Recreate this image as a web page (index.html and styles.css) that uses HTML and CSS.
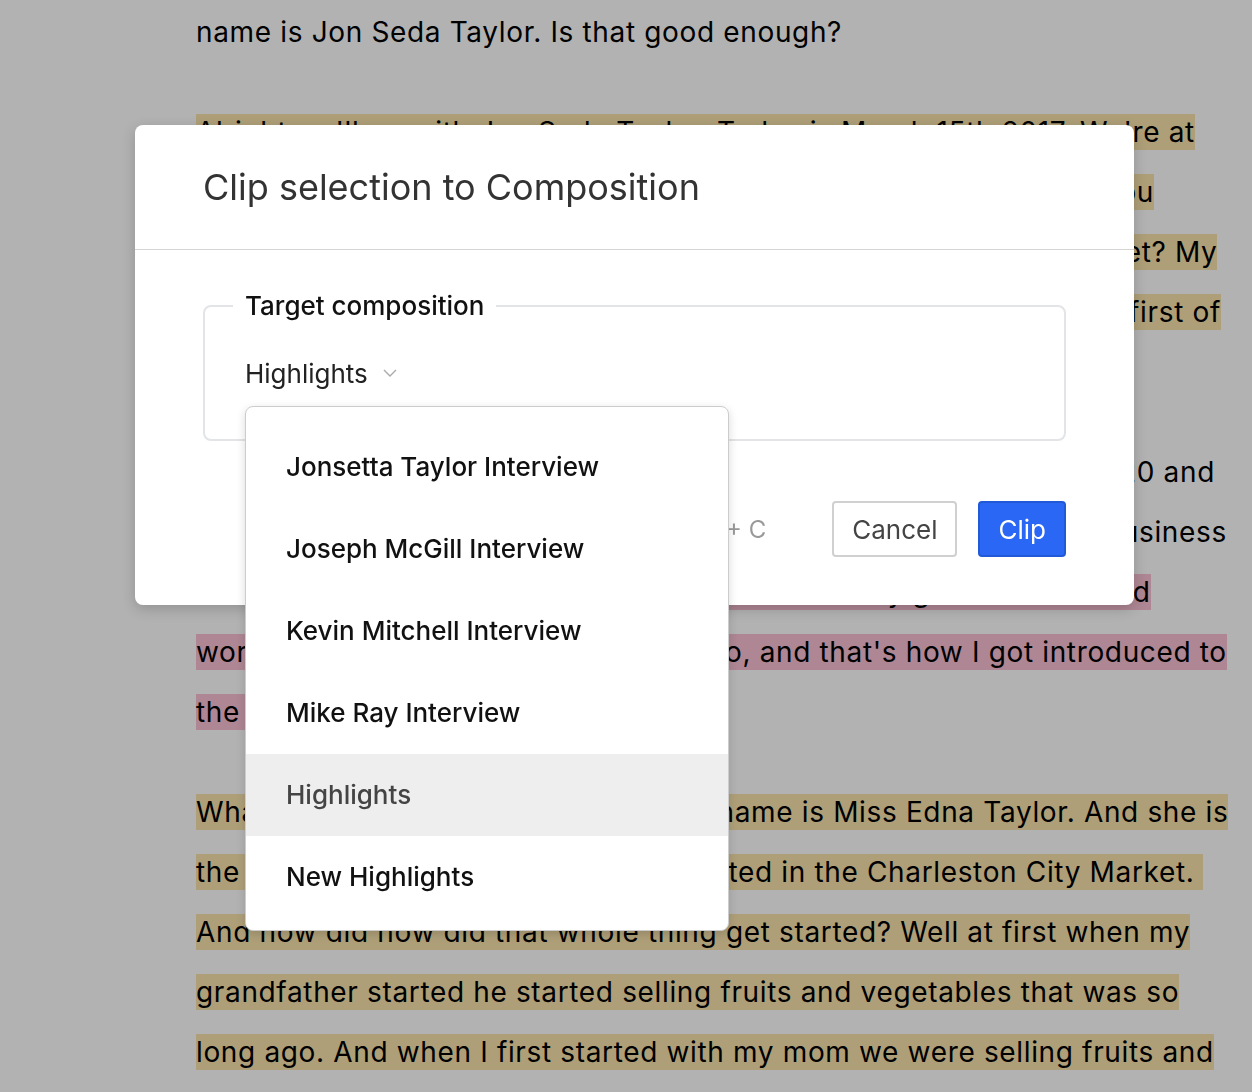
FILE: index.html
```html
<!DOCTYPE html>
<html lang="en">
<head>
    <meta charset="UTF-8">
    <meta name="viewport" content="width=device-width, initial-scale=1.0">
    <title>Clip selection to Composition</title>
    <link rel="stylesheet" href="styles.css">
</head>
<body>
    <main class="transcript">
        <p>name is Jon Seda Taylor. Is that good enough?</p>

        <p><mark class="hl-tan">Alright we'll go with Jon Seda Taylor. Today is March 15th 2017. We're at<br>in Charleston, South Carolina. So do tell me a little bit about what you<br>do here, and how long you've been working in the Charleston Market? My<br>name is Jonsetta Taylor and I am a sweetgrass basket weaver. The first of<br>my family to sew baskets was my great grandmother.</mark></p>

        <p>She started sewing baskets and selling them back in the year of 1920 and<br>then my grandmother and my mother carried on with the family's business<br>after that. When I was little, <mark class="hl-pink">I used to go sit with my grandmother and<br>work on all her baskets after school too, and that's how I got introduced to<br>the craft.</mark></p>

        <p><mark class="hl-tan">What is your mother's full name? Her name is Miss Edna Taylor. And she is<br>the lady who has the stand that is located in the Charleston City Market.&nbsp;<br>And how did how did that whole thing get started? Well at first when my<br>grandfather started he started selling fruits and vegetables that was so<br>long ago. And when I first started with my mom we were selling fruits and</mark></p>
    </main>

    <div class="backdrop"></div>

    <div class="modal">
        <header class="modal-header">
            <h2>Clip selection to Composition</h2>
        </header>

        <div class="modal-body">
            <fieldset class="field">
                <legend>Target composition</legend>
                <div class="select">
                    <button class="select-value">
                        Highlights
                        <svg class="chevron" viewBox="0 0 14 8" width="14" height="8">
                            <path d="M1 1l6 6 6-6" fill="none" stroke="currentColor" stroke-width="1.4"/>
                        </svg>
                    </button>
                    <ul class="select-menu">
                        <li>Jonsetta Taylor Interview</li>
                        <li>Joseph McGill Interview</li>
                        <li>Kevin Mitchell Interview</li>
                        <li>Mike Ray Interview</li>
                        <li class="active">Highlights</li>
                        <li>New Highlights</li>
                    </ul>
                </div>
            </fieldset>
        </div>

        <footer class="modal-footer">
            <span class="shortcut">Ctrl + C</span>
            <button class="btn">Cancel</button>
            <button class="btn btn-primary">Clip</button>
        </footer>
    </div>
</body>
</html>
```

FILE: styles.css
```css
body {
    margin: 0;
    background: #fff;
    color: #000;
    font-family: Inter, 'Noto Sans', sans-serif;
    overflow: hidden;
}

/* transcript behind the dialog */
.transcript {
    padding: 2px 0 0 196px;
    font-size: 28px;
    letter-spacing: 0.65px;
    line-height: 60px;
}

.transcript p {
    margin: 0 0 40px 0;
    white-space: nowrap;
}

.transcript mark {
    color: inherit;
    padding: 1px 0;
}

.hl-tan {
    background: #f9e4ac;
}

.hl-pink {
    background: #f9c0d4;
}

.backdrop {
    position: fixed;
    top: 0;
    left: 0;
    right: 0;
    bottom: 0;
    background: rgba(0,0,0,0.3);
}

/* dialog */
.modal {
    position: fixed;
    top: 125px;
    left: 135px;
    width: 999px;
    background: #fff;
    border-radius: 8px;
    box-shadow: 0 4px 14px rgba(0,0,0,0.18);
}

.modal-header {
    height: 124px;
    display: flex;
    align-items: center;
    padding: 0 68px;
    border-bottom: 1px solid #d4d4d4;
}

.modal-header h2 {
    margin: 0;
    font-size: 36px;
    font-weight: 400;
    color: #333;
}

.modal-body {
    padding: 40px 68px 0;
}

.field {
    margin: 0;
    padding: 31px 40px 46px;
    border: 2px solid #e2e4e7;
    border-radius: 8px;
}

.field legend {
    margin-left: -12px;
    padding: 0 12px;
    font-size: 26px;
    font-weight: 500;
    line-height: 32px;
    color: #111;
}

.select {
    position: relative;
}

.select-value {
    display: inline-flex;
    align-items: center;
    gap: 15px;
    height: 40px;
    padding: 0;
    border: none;
    background: none;
    font-family: inherit;
    font-size: 26px;
    color: #222;
}

.chevron {
    color: #aaa;
}

.select-menu {
    position: absolute;
    top: calc(100% + 13px);
    left: 0;
    width: 482px;
    margin: 0;
    padding: 19px 0 12px;
    list-style: none;
    background: #fff;
    border: 1px solid #ccc;
    border-radius: 8px;
    box-shadow: 0 3px 10px rgba(0,0,0,0.15);
    z-index: 10;
}

.select-menu li {
    height: 82px;
    line-height: 82px;
    padding: 0 40px;
    font-size: 26px;
    font-weight: 500;
    color: #111;
}

.select-menu li.active {
    background: #eee;
    color: #444;
}

.modal-footer {
    display: flex;
    align-items: center;
    justify-content: flex-end;
    gap: 21px;
    padding: 60px 68px 48px;
}

.shortcut {
    margin-right: 45px;
    font-size: 24px;
    color: #999;
}

.btn {
    height: 56px;
    padding: 0 18px;
    border: 2px solid #d0d0d0;
    border-radius: 4px;
    background: #fff;
    color: #444;
    font-family: inherit;
    font-size: 26px;
}

.btn-primary {
    padding: 0 18px;
    background: #2a67f5;
    border-color: #2259d6;
    color: #fff;
}
```
